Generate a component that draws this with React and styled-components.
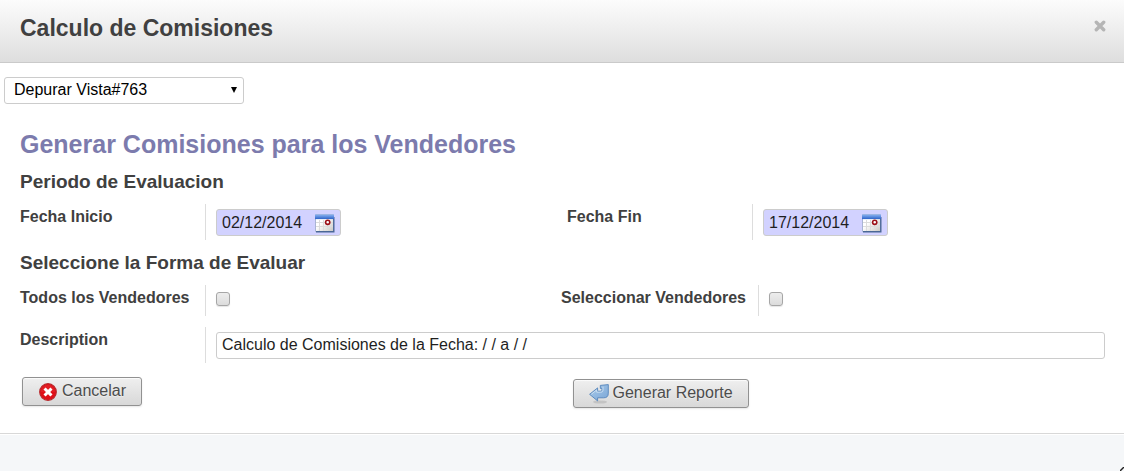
import React from "react";
import styled, { createGlobalStyle } from "styled-components";

const GlobalStyle = createGlobalStyle`
  *, *::before, *::after { box-sizing: border-box; }
  body { margin: 0; background: #fff; }
  body, button, input, select {
    font-family: "Liberation Sans", Arial, sans-serif;
    font-size: 16px;
  }
`;

const Dialog = styled.div`
  display: flex;
  flex-direction: column;
  min-height: 100vh;
  color: #404040;
`;

const TitleBar = styled.header`
  display: flex;
  align-items: flex-start;
  justify-content: space-between;
  padding: 14px 18px 20px 20px;
  border-bottom: 1px solid #cacaca;
  background: linear-gradient(#fcfcfc, #dedede);
`;

const Title = styled.h1`
  margin: 0;
  font-size: 23px;
  line-height: 28px;
`;

const CloseButton = styled.button`
  display: flex;
  padding: 6px 0;
  border: 0;
  background: none;
`;

const Body = styled.main`
  padding: 14px 19px 25px 20px;
`;

const DebugBar = styled.div`
  display: flex;
  margin-left: -16px;
`;

const SelectBox = styled.div`
  position: relative;
  width: 240px;

  svg {
    position: absolute;
    right: 7px;
    top: 10px;
    pointer-events: none;
  }
`;

const Select = styled.select`
  display: block;
  width: 100%;
  height: 27px;
  padding: 0 24px 2px 9px;
  border: 1px solid #ccc;
  border-radius: 3px;
  appearance: none;
  background: #fff;
  color: #000;
`;

const FormTitle = styled.h2`
  margin: 25px 0 0;
  color: #7c7bad;
  font-size: 25px;
  line-height: 30px;
`;

const SectionTitle = styled.h3`
  margin: 11px 0 10px;
  font-size: 19px;
  line-height: 24px;
`;

const Row = styled.div`
  display: grid;
  grid-template-columns: ${(p) => (p.$single ? "1fr" : "1fr 1fr")};
  column-gap: ${(p) => p.$gap || 0}px;
  margin-top: ${(p) => (p.$single ? 11 : 0)}px;
  padding-right: ${(p) => p.$inset || 0}px;
`;

const Field = styled.div`
  display: flex;
  min-height: ${(p) => (p.$short ? 31 : 36)}px;
`;

const Label = styled.label`
  flex: none;
  width: ${(p) => (p.$wide ? 198 : 186)}px;
  border-right: 1px solid #ddd;
  font-weight: bold;
  line-height: 26px;
  white-space: nowrap;
`;

const Control = styled.div`
  display: flex;
  flex: 1;
  align-items: flex-start;
  min-width: 0;
  padding: ${(p) => (p.$tick ? 7 : 5)}px 0 0 10px;
`;

const DateBox = styled.div`
  display: flex;
  align-items: center;
  width: 125px;
  height: 27px;
  padding: 0 5px;
  border: 1px solid #ccc;
  border-radius: 3px;
  background: #d2d2ff;
`;

const DateInput = styled.input`
  flex: 1;
  min-width: 0;
  padding: 0;
  border: 0;
  outline: 0;
  background: transparent;
  color: #1f1f1f;
`;

const IconButton = styled.button`
  display: flex;
  padding: 2px 0 0;
  border: 0;
  background: none;
`;

const TextInput = styled.input`
  width: 100%;
  height: 27px;
  padding: 0 5px 2px;
  border: 1px solid #ccc;
  border-radius: 3px;
  background: #fff;
  color: #1f1f1f;
`;

const Checkbox = styled.input`
  width: 14px;
  height: 14px;
  margin: 0;
  border: 1px solid #a6a6a6;
  border-radius: 3px;
  appearance: none;
  background: linear-gradient(#ededed, #dcdcdc);
  box-shadow: 0 1px 1px rgba(0, 0, 0, 0.1);

  &:checked { background: #7c7bad; }
`;

const Actions = styled.div`
  display: grid;
  grid-template-columns: 1fr 1fr;
  column-gap: 18px;
  align-items: start;
  margin-top: 14px;
  padding-left: 2px;
`;

const Cell = styled.div`
  display: flex;
  padding-top: ${(p) => (p.$lower ? 2 : 0)}px;
`;

const Button = styled.button`
  display: flex;
  align-items: center;
  gap: 4px;
  height: 29px;
  padding: 0 15px;
  border: 1px solid #919191;
  border-radius: 3px;
  background: linear-gradient(#efefef, #d8d8d8);
  box-shadow: 0 1px 2px rgba(0, 0, 0, 0.1), inset 0 1px 1px rgba(255, 255, 255, 0.8);
  color: #4c4c4c;
  text-shadow: 0 1px 1px rgba(255, 255, 255, 0.5);
  white-space: nowrap;

  span { line-height: 20px; padding-bottom: 2px; }
`;

const Footer = styled.footer`
  position: relative;
  flex: 1;
  min-height: 38px;
  border-top: 1px solid #d8d8d8;
  background: #f5f7f9;
  box-shadow: inset 0 1px 0 #fff;

  svg { position: absolute; right: 0; bottom: 0; }
`;

function CloseIcon() {
  return (
    <svg width="12" height="12" viewBox="0 0 12 12" aria-hidden="true">
      <path d="M2.3 2.3 9.7 9.7M9.7 2.3 2.3 9.7" stroke="#b5b5b5" strokeWidth="3.4" strokeLinecap="round" />
    </svg>
  );
}

function CalendarIcon() {
  return (
    <svg width="20" height="19" viewBox="0 0 20 19" aria-hidden="true">
      <defs>
        <linearGradient id="calTop" x2="0" y2="1">
          <stop offset="0" stopColor="#8bb4f2" />
          <stop offset="1" stopColor="#2c62c8" />
        </linearGradient>
        <linearGradient id="calPage" x2="1" y2="1">
          <stop offset=".4" stopColor="#fff" />
          <stop offset="1" stopColor="#c9c7c2" />
        </linearGradient>
      </defs>
      <path d="M.5 .5h18v17H.5z" fill="url(#calPage)" stroke="#a9b4d4" />
      <path d="M1 17.7h17.8V3" fill="none" stroke="#4a6796" strokeWidth="1.4" />
      <path d="M0 .5h19v4.6H0z" fill="url(#calTop)" />
      <path d="M1 8.5h17M1 12.5h17M4.5 6v11M8.5 6v11M12.5 6v11" stroke="#dcdcdc" />
      <circle cx="12.7" cy="8.3" r="2.1" fill="#fff" stroke="#9c1018" strokeWidth="1.6" />
    </svg>
  );
}

function CancelIcon() {
  return (
    <svg width="20" height="18" viewBox="-1 0 20 18" aria-hidden="true">
      <circle cx="9" cy="9" r="8.3" fill="#df1018" stroke="#b8282c" strokeWidth="1.2" />
      <path d="M1.8 9a7.2 7.2 0 0 1 14.4 0Z" fill="#e8383c" opacity=".35" />
      <path d="M6.6 6.6 11.4 11.4M11.4 6.6 6.6 11.4" stroke="#fff" strokeWidth="3" strokeLinecap="square" />
    </svg>
  );
}

function ReturnIcon() {
  return (
    <svg width="20" height="20" viewBox="0 0 20 20" aria-hidden="true">
      <defs>
        <linearGradient id="retFill" x1="0" x2="1" y2="1">
          <stop offset="0" stopColor="#a9cbea" />
          <stop offset="1" stopColor="#7ba6d6" />
        </linearGradient>
      </defs>
      <ellipse cx="11" cy="18" rx="7" ry="1.6" fill="#8b8b8b" opacity=".3" />
      <path
        d="M.6 10.3 8.6 3.9v3.3h2.6c1.2 0 1.7-.5 1.7-1.5V4.4h-1.6V1.4l8-.8v8.6c0 3.2-1.5 4.6-4.6 4.6H8.6v3.1Z"
        fill="url(#retFill)"
        stroke="#5584bb"
        strokeWidth=".9"
        strokeLinejoin="round"
      />
      <path d="M2.4 10.2 7.7 6v2.2h4.1c1.6 0 2.2-.8 2.2-2.2V2.6" fill="none" stroke="#d6e6f5" strokeWidth=".8" />
    </svg>
  );
}

function DateField({ id, label, value }) {
  return (
    <Field>
      <Label htmlFor={id}>{label}</Label>
      <Control>
        <DateBox>
          <DateInput id={id} type="text" defaultValue={value} />
          <IconButton type="button" aria-label={`Calendario ${label}`}>
            <CalendarIcon />
          </IconButton>
        </DateBox>
      </Control>
    </Field>
  );
}

function CheckField({ id, label, wide }) {
  return (
    <Field $short>
      <Label htmlFor={id} $wide={wide}>{label}</Label>
      <Control $tick>
        <Checkbox id={id} type="checkbox" />
      </Control>
    </Field>
  );
}

export default function App() {
  return (
    <Dialog>
      <GlobalStyle />
      <TitleBar>
        <Title>Calculo de Comisiones</Title>
        <CloseButton type="button" aria-label="Cerrar">
          <CloseIcon />
        </CloseButton>
      </TitleBar>
      <Body>
        <DebugBar>
          <SelectBox>
            <Select aria-label="Depurar Vista">
              <option>Depurar Vista#763</option>
            </Select>
            <svg width="6" height="6" viewBox="0 0 6 6" aria-hidden="true">
              <path d="M0 0h6L3 6Z" fill="#000" />
            </svg>
          </SelectBox>
        </DebugBar>
        <FormTitle>Generar Comisiones para los Vendedores</FormTitle>
        <SectionTitle>Periodo de Evaluacion</SectionTitle>
        <Row $gap={9}>
          <DateField id="start" label="Fecha Inicio" value="02/12/2014" />
          <DateField id="end" label="Fecha Fin" value="17/12/2014" />
        </Row>
        <SectionTitle>Seleccione la Forma de Evaluar</SectionTitle>
        <Row $inset={3}>
          <CheckField id="all" label="Todos los Vendedores" />
          <CheckField id="some" label="Seleccionar Vendedores" wide />
        </Row>
        <Row $single>
          <Field>
            <Label htmlFor="description">Description</Label>
            <Control>
              <TextInput id="description" type="text" defaultValue="Calculo de Comisiones de la Fecha: / / a / /" />
            </Control>
          </Field>
        </Row>
        <Actions>
          <Cell>
            <Button type="button">
              <CancelIcon />
              <span>Cancelar</span>
            </Button>
          </Cell>
          <Cell $lower>
            <Button type="button">
              <ReturnIcon />
              <span>Generar Reporte</span>
            </Button>
          </Cell>
        </Actions>
      </Body>
      <Footer>
        <svg width="4" height="4" viewBox="0 0 4 4" aria-hidden="true">
          <path d="M0 4 4 0" stroke="#222" strokeWidth="1.4" />
        </svg>
      </Footer>
    </Dialog>
  );
}
